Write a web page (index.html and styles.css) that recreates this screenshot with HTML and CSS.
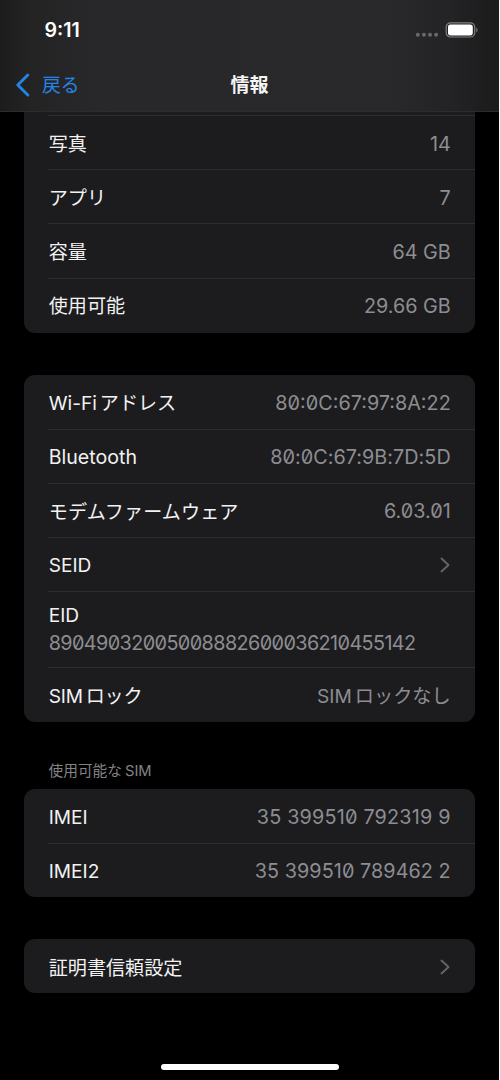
FILE: index.html
```html
<!DOCTYPE html>
<html lang="ja">
<head>
<meta charset="utf-8">
<title>情報</title>
<link rel="stylesheet" href="styles.css">
</head>
<body>
<div class="screen">
  <header class="header">
    <div class="status">
      <span class="time">9:11</span>
      <div class="indicators">
        <svg class="dots" width="24" height="6" viewBox="0 0 24 6"><g fill="#69696b"><circle cx="2.8" cy="2.8" r="2"/><circle cx="8.9" cy="2.8" r="2"/><circle cx="15" cy="2.8" r="2"/><circle cx="21.1" cy="2.8" r="2"/></g></svg>
        <svg class="battery" width="33" height="16" viewBox="0 0 33 16"><rect x="1.2" y=".8" width="28.5" height="14.2" rx="4.3" fill="none" stroke="#818183" stroke-width="1.2"/><rect x="3" y="2.4" width="24.8" height="11" rx="2.6" fill="#fff"/><path d="M31.3 5.4c1.6.7 1.6 4.3 0 5z" fill="#818183"/></svg>
      </div>
    </div>
    <nav class="nav">
      <div class="back">
        <svg width="15" height="24" viewBox="0 0 15 24"><path d="M12.8 2 2.8 12l10 10" fill="none" stroke="#2484e6" stroke-width="2.9" stroke-linecap="round" stroke-linejoin="round"/></svg>
        <span class="back-text">戻る</span>
      </div>
      <h1 class="title">情報</h1>
    </nav>
  </header>

  <main class="content">
    <section class="card card-storage">
      <div class="row"><span class="label">写真</span><span class="value">14</span></div>
      <div class="row"><span class="label">アプリ</span><span class="value">7</span></div>
      <div class="row"><span class="label">容量</span><span class="value">64 GB</span></div>
      <div class="row"><span class="label">使用可能</span><span class="value">29.66 GB</span></div>
    </section>

    <section class="card card-network">
      <div class="row row-low"><span class="label"><span class="latin">Wi-Fi</span>アドレス</span><span class="value code">80:0C:67:97:8A:22</span></div>
      <div class="row row-low"><span class="label bluetooth">Bluetooth</span><span class="value code mac-bt">80:0C:67:9B:7D:5D</span></div>
      <div class="row row-low"><span class="label modem">モデムファームウェア</span><span class="value code">6.03.01</span></div>
      <div class="row"><span class="label">SEID</span><svg class="chevron" width="11" height="16" viewBox="0 0 11 16"><path d="m1.5 1.6 7 6.4-7 6.4" fill="none" stroke="#636366" stroke-width="2" stroke-linecap="round" stroke-linejoin="round"/></svg></div>
      <div class="row row-stacked"><span class="label">EID</span><span class="value code eid">89049032005008882600036210455142</span></div>
      <div class="row row-lock"><span class="label lock"><span class="latin">SIM</span>ロック</span><span class="value value-ja"><span class="latin">SIM</span>ロックなし</span></div>
    </section>

    <h2 class="section-title">使用可能な<span class="latin-after">SIM</span></h2>
    <section class="card card-sim">
      <div class="row"><span class="label">IMEI</span><span class="value code imei">35 399510 792319 9</span></div>
      <div class="row"><span class="label">IMEI2</span><span class="value code imei2">35 399510 789462 2</span></div>
    </section>

    <section class="card card-trust">
      <div class="row"><span class="label">証明書信頼設定</span><svg class="chevron" width="11" height="16" viewBox="0 0 11 16"><path d="m1.5 1.6 7 6.4-7 6.4" fill="none" stroke="#636366" stroke-width="2" stroke-linecap="round" stroke-linejoin="round"/></svg></div>
    </section>
  </main>
  <div class="home"></div>
</div>
</body>
</html>
```
FILE: styles.css
```css
* { box-sizing: border-box; }
body { margin: 0; background: #fff; overflow: hidden; }
.screen {
  display: flex; flex-direction: column;
  width: 499px; height: 1080px; background: #000; color: #f2f2f3;
  font-family: Inter, "Noto Sans CJK JP", sans-serif;
  font-size: 19.2px; line-height: 28px; overflow: hidden;
}
.header {
  flex: none; height: 112px; border-bottom: 1px solid #2c2c2e;
  background: linear-gradient(90deg, #1c1c1c 0, #232324 28px, #28282a 90px, #29292b 390px, #232325 450px, #1b1b1c 499px);
}
.status { display: flex; justify-content: space-between; height: 58px; padding: 16px 21px 0 44.5px; }
.time { font-size: 19.6px; font-weight: 600; color: #fff; }
.indicators { display: flex; gap: 6px; }
.dots { margin-top: 16px; }
.battery { margin-top: 6px; }
.nav { display: grid; grid-template-columns: 1fr auto 1fr; height: 54px; align-items: center; padding: 0 15px; }
.back { display: flex; align-items: center; gap: 12px; color: #2484e6; font-size: 18.8px; }
.back-text { padding-top: 2px; }
.title { margin: 0; padding-top: 2px; font-size: 19px; line-height: 28px; font-weight: 700; color: #f5f5f5; }
.content { flex: 1; padding: 0 24px; }
.card { background: #1c1c1e; border-radius: 11px; overflow: hidden; width: 451px; padding-left: 24px; }
.row {
  display: flex; justify-content: space-between; align-items: center;
  height: 54.2px; padding: 0 24.3px 0 .7px; border-top: 1px solid #2d2d2f;
}
.card > .row:first-child { border-top-color: transparent; }
.card-storage { border-top-left-radius: 0; border-top-right-radius: 0; padding-top: 3px; height: 220.5px; }
.card-storage > .row:first-child { border-top-color: #2d2d2f; }
.card-storage .row, .card-sim .row, .card-trust .row { padding-top: 2px; }
.row-low { padding-top: 1.6px; }
.row-lock { padding-top: 2px; }
.card-network { margin-top: 42.5px; height: 346.5px; }
.card-network > .row:first-child { height: 53.6px; }
.card-sim { height: 108.2px; }
.card-trust { margin-top: 42.3px; height: 54.2px; }
.card-trust .chevron { margin-bottom: 2px; }
.label { font-size: 19.1px; }
.bluetooth { font-size: 19.6px; }
.modem { letter-spacing: .1px; padding-top: 1px; }
.lock { letter-spacing: -.2px; }
.value { color: #8d8d92; font-size: 19.8px; }
.value-ja { font-size: 19.2px; }
.code { font-feature-settings: "zero" 1; }
.mac-bt { letter-spacing: .03px; }
.imei { letter-spacing: .2px; }
.imei2 { letter-spacing: .06px; }
.eid { letter-spacing: -.6px; }
.latin { margin-right: 3px; }
.latin-after { margin-left: 3px; }
.row-stacked { flex-direction: column; align-items: flex-start; justify-content: center; height: 75.8px; padding-bottom: 2px; }
.section-title { margin: 35px 0 4px 24.5px; height: 28px; font-size: 14.7px; line-height: 28px; font-weight: 400; color: #828287; }
.home { flex: none; align-self: center; width: 178px; height: 6px; margin-bottom: 10px; border-radius: 3px; background: #fff; }
```
